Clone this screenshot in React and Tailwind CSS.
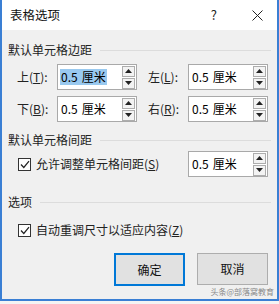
import React from "react";

const font = { fontFamily: '"Noto Sans CJK SC", "Noto Sans", sans-serif' };

const Spinner = () => (
  <div className="flex flex-col gap-[1px] mr-[1px]">
    <div className="w-[13px] h-[11px] border border-[#adadad] bg-[#f3f3f3] flex items-center justify-center">
      <svg width="7" height="4" viewBox="0 0 7 4">
        <path d="M3.5 0 L7 4 L0 4 Z" fill="#222" />
      </svg>
    </div>
    <div className="w-[13px] h-[11px] border border-[#adadad] bg-[#f3f3f3] flex items-center justify-center">
      <svg width="7" height="4" viewBox="0 0 7 4">
        <path d="M0 0 L7 0 L3.5 4 Z" fill="#222" />
      </svg>
    </div>
  </div>
);

const NumberBox = ({ selected }) => (
  <div className="w-[80px] h-[26px] border border-[#a9a9a9] bg-white flex items-center justify-between pl-[2px]">
    <span
      className={`text-[12px] leading-[16px] px-[1px] text-black ${
        selected ? "bg-[#99c9ef]" : ""
      }`}
    >
      0.5<span className="ml-[4px]">厘米</span>
    </span>
    <Spinner />
  </div>
);

const SectionTitle = ({ children }) => (
  <div className="flex items-center text-[12px] leading-[16px] text-[#222]">
    <span>{children}</span>
    <div className="flex-1 h-px bg-[#dcdcdc] ml-[8px]" />
  </div>
);

const Check = () => (
  <div className="w-[13px] h-[13px] border border-[#333] bg-white flex items-center justify-center">
    <svg width="10" height="9" viewBox="0 0 10 9">
      <path d="M1 4.5 L3.8 7.5 L9 1.2" stroke="#222" strokeWidth="1.2" fill="none" />
    </svg>
  </div>
);

const Field = ({ label, hot, rest, selected }) => (
  <div className="flex items-center">
    <span className="w-[40px] text-[12px] leading-[16px] text-[#222]">
      {label}(<span className="underline">{hot}</span>){rest}
    </span>
    <NumberBox selected={selected} />
  </div>
);

export default function App() {
  return (
    <div className="w-[279px] h-[304px] bg-[#f4f4f4]" style={font}>
      <div className="relative w-[279px] h-[301px] border-l-2 border-r-2 border-b-2 border-[#3a7fd4] bg-[#f0f0f0] flex flex-col">
        {/* Title bar */}
        <div className="h-[30px] bg-white flex items-center pl-[8px] pr-[14px]">
          <span className="text-[12.5px] text-[#111] flex-1">表格选项</span>
          <span className="text-[13px] text-[#222] mr-[35px]">?</span>
          <svg width="11" height="11" viewBox="0 0 11 11">
            <path d="M0.5 0.5 L10.5 10.5 M10.5 0.5 L0.5 10.5" stroke="#222" strokeWidth="1" />
          </svg>
        </div>

        <div className="flex flex-col px-[6px] pt-[12px]">
          <SectionTitle>默认单元格边距</SectionTitle>
          <div className="flex flex-col gap-[6px] mt-[6px] pl-[9px]">
            <div className="flex gap-[11px]">
              <Field label="上" hot="T" rest=":" selected />
              <Field label="左" hot="L" rest=":" />
            </div>
            <div className="flex gap-[11px]">
              <Field label="下" hot="B" rest=":" />
              <Field label="右" hot="R" rest=":" />
            </div>
          </div>

          <div className="mt-[10px]">
            <SectionTitle>默认单元格间距</SectionTitle>
          </div>
          <div className="flex items-center mt-[3px] pl-[10px]">
            <Check />
            <span className="ml-[5px] text-[12px] leading-[16px] text-[#222] flex-1">
              允许调整单元格间距(<span className="underline">S</span>)
            </span>
            <div className="mr-[3px]">
              <NumberBox />
            </div>
          </div>

          <div className="mt-[17px]">
            <SectionTitle>选项</SectionTitle>
          </div>
          <div className="flex items-center mt-[12px] pl-[10px]">
            <Check />
            <span className="ml-[5px] text-[12px] leading-[16px] text-[#222]">
              自动重调尺寸以适应内容(<span className="underline">Z</span>)
            </span>
          </div>

          <div className="flex justify-end gap-[12px] mt-[15px] pr-[3px]">
            <button className="w-[71px] h-[33px] border-2 border-[#0078d7] bg-[#e1e1e1] text-[12px] text-[#111]">
              确定
            </button>
            <button className="w-[71px] h-[32px] border border-[#adadad] bg-[#e1e1e1] text-[12px] text-[#111]">
              取消
            </button>
          </div>
        </div>

        <span className="absolute right-[3px] bottom-[2px] text-[8px] leading-[10px] text-[#8a8a8a]">
          头条@部落窝教育
        </span>
      </div>
    </div>
  );
}
